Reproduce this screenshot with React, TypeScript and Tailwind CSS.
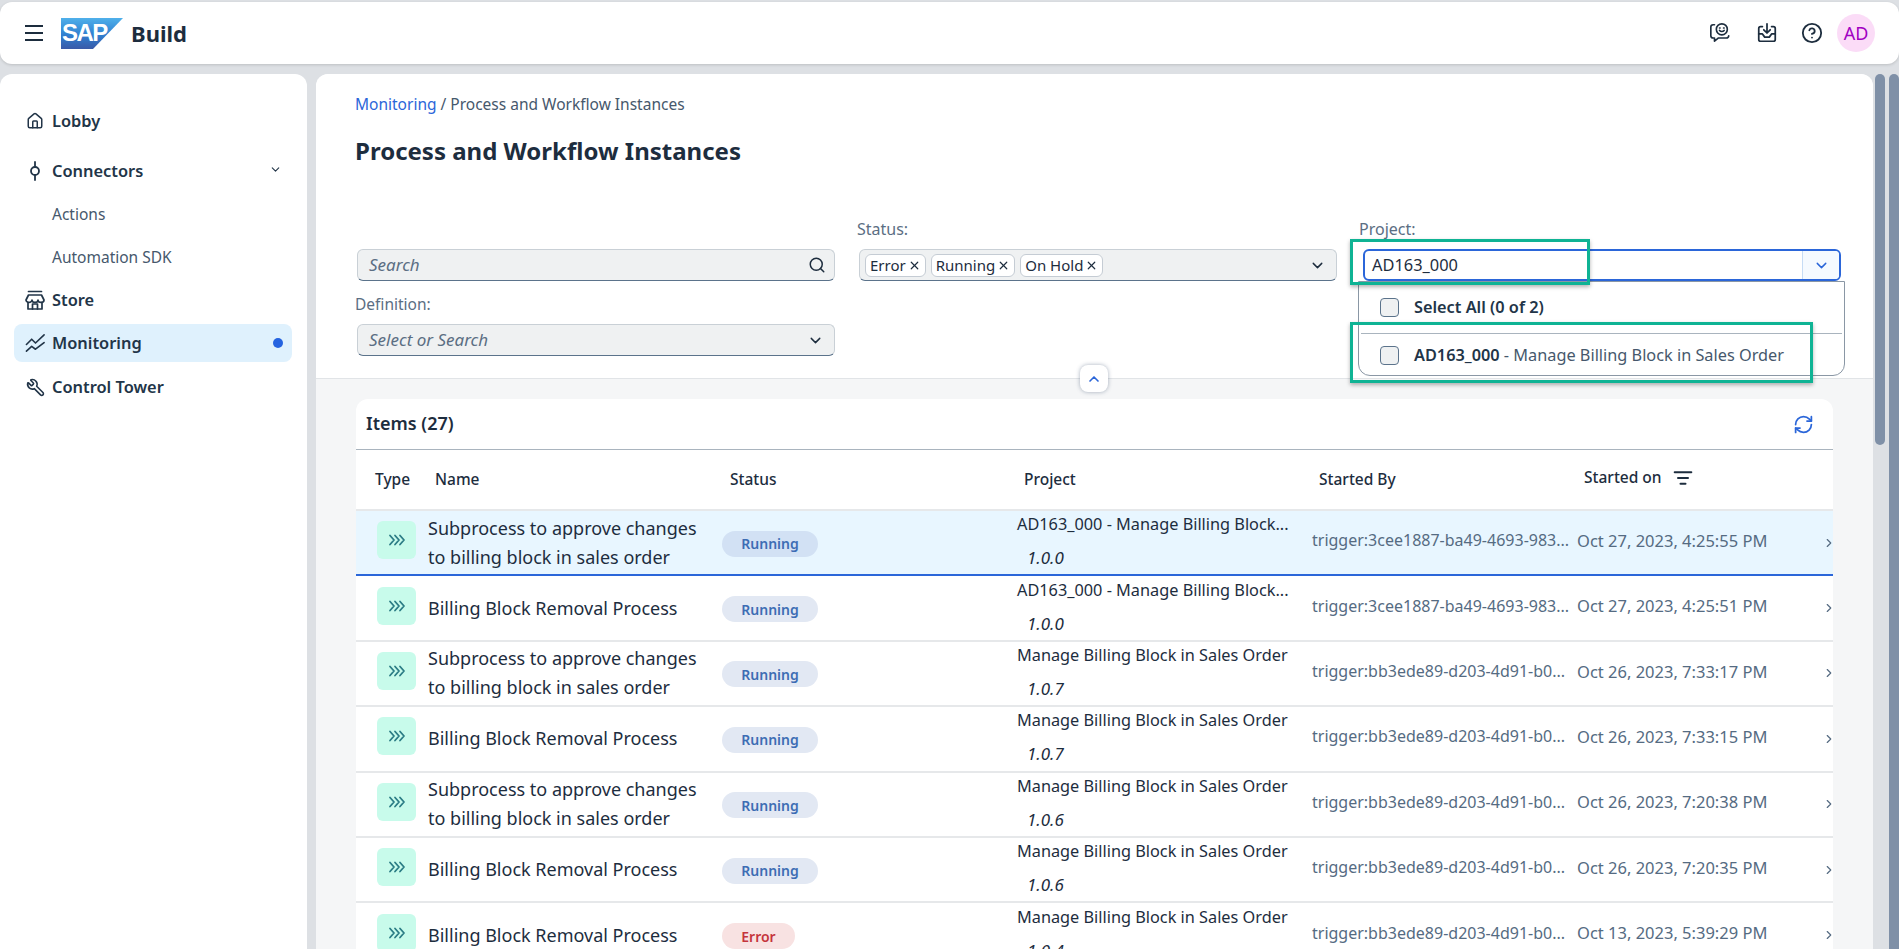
import { ChevronDown, ChevronRight, ChevronUp, CircleHelp, House, ListFilter, RefreshCw, Search, Wrench, X } from "lucide-react";

type Row = { name: string[]; status: string; project: string; version: string; by: string; on: string };

const BILLING = ["Billing Block Removal Process"];
const SUB = ["Subprocess to approve changes", "to billing block in sales order"];
const P1 = "AD163_000 - Manage Billing Block...";
const P2 = "Manage Billing Block in Sales Order";
const T1 = "trigger:3cee1887-ba49-4693-983...";
const T2 = "trigger:bb3ede89-d203-4d91-b0...";

const ROWS: Row[] = [
  { name: SUB, status: "Running", project: P1, version: "1.0.0", by: T1, on: "Oct 27, 2023, 4:25:55 PM" },
  { name: BILLING, status: "Running", project: P1, version: "1.0.0", by: T1, on: "Oct 27, 2023, 4:25:51 PM" },
  { name: SUB, status: "Running", project: P2, version: "1.0.7", by: T2, on: "Oct 26, 2023, 7:33:17 PM" },
  { name: BILLING, status: "Running", project: P2, version: "1.0.7", by: T2, on: "Oct 26, 2023, 7:33:15 PM" },
  { name: SUB, status: "Running", project: P2, version: "1.0.6", by: T2, on: "Oct 26, 2023, 7:20:38 PM" },
  { name: BILLING, status: "Running", project: P2, version: "1.0.6", by: T2, on: "Oct 26, 2023, 7:20:35 PM" },
  { name: BILLING, status: "Error", project: P2, version: "1.0.4", by: T2, on: "Oct 13, 2023, 5:39:29 PM" },
];

function SapLogo() {
  return (
    <div className="relative w-[62px] h-[31px]">
      <svg viewBox="0 0 62 31" className="absolute inset-0 w-full h-full">
        <defs>
          <linearGradient id="sap" x1="0" y1="0" x2="0" y2="1">
            <stop offset="0" stopColor="#4fb0ea" />
            <stop offset="0.55" stopColor="#2f7fd0" />
            <stop offset="1" stopColor="#3a5aa8" />
          </linearGradient>
        </defs>
        <polygon points="0,0 62,0 32,31 0,31" fill="url(#sap)" />
      </svg>
      <span className="absolute left-[1px] top-[3px] text-[24px] leading-[24px] font-bold tracking-[-1.5px] text-white font-['Liberation_Sans',sans-serif]">SAP</span>
    </div>
  );
}

function ChatSmile() {
  return (
    <svg viewBox="0 0 24 24" className="w-[22px] h-[22px]" fill="none" stroke="#1d2d3e" strokeWidth="1.8" strokeLinecap="round" strokeLinejoin="round">
      <circle cx="14" cy="8" r="6" />
      <path d="M11.500 9.200c1.300 1.500 3.700 1.500 5 0" />
      <path d="M11.500 6.500h.6M15.900 6.500h.6" />
      <path d="M6 3H4.500A2.500 2.500 0 0 0 2 5.500V15a2.500 2.500 0 0 0 2.500 2.500H6V21l4-3.500h9a2.500 2.500 0 0 0 2.500-2.500" />
    </svg>
  );
}

function InboxDown() {
  return (
    <svg viewBox="0 0 24 24" className="w-[22px] h-[22px]" fill="none" stroke="#1d2d3e" strokeWidth="1.9" strokeLinecap="round" strokeLinejoin="round">
      <path d="M7 5H5a2 2 0 0 0-2 2v12a2 2 0 0 0 2 2h14a2 2 0 0 0 2-2V7a2 2 0 0 0-2-2h-2" />
      <path d="M12 2v10M8.500 8.500 12 12l3.500-3.500" />
      <path d="M3 13h4l2.500 3.500h5L17 13h4" />
    </svg>
  );
}

function Connector() {
  return (
    <svg viewBox="0 0 20 20" className="w-[20px] h-[20px]" fill="none" stroke="#223548" strokeWidth="1.8" strokeLinecap="round">
      <circle cx="10" cy="10" r="4" />
      <path d="M10 1v5M10 14v5" />
    </svg>
  );
}

function StoreIcon() {
  return (
    <svg viewBox="0 0 20 20" className="w-[20px] h-[20px]" fill="none" stroke="#223548" strokeWidth="1.7" strokeLinecap="round" strokeLinejoin="round">
      <path d="M3.500 1.500h13" />
      <path d="M3.500 5h13l2.500 5a3 2.400 0 0 1-6 0 3 2.400 0 0 1-6 0 3 2.400 0 0 1-6 0z" />
      <path d="M3 12.500V19h14v-6.500" />
      <path d="M7.500 19v-5h5v5" />
    </svg>
  );
}

function Trend() {
  return (
    <svg viewBox="0 0 22 22" className="w-[21px] h-[21px]" fill="none" stroke="#223548" strokeWidth="1.7" strokeLinecap="round" strokeLinejoin="round">
      <path d="M1.500 12 7 6.500l4 4L20 2" />
      <path d="M1.500 19 7 14l4 3 9-7" />
    </svg>
  );
}

function TripleChevron() {
  return (
    <svg viewBox="0 0 18 12" className="w-[18px] h-[12px]" fill="none" stroke="#2b7c85" strokeWidth="1.8" strokeLinecap="round" strokeLinejoin="round">
      <path d="M2 1.500 6 6l-4 4.500M7 1.500 11 6l-4 4.500M12 1.500 16 6l-4 4.500" />
    </svg>
  );
}

function NavItem({ icon, label, sub, active, chevron, className }: { icon?: React.ReactNode; label: string; sub?: boolean; active?: boolean; chevron?: boolean; className?: string }) {
  return (
    <div className={`relative h-[38px] mx-[14px] w-[278px] rounded-lg flex items-center ${active ? "bg-[#dff1fd]" : ""} ${className ?? ""}`}>
      <span className="w-[24px] ml-[9px] flex justify-center shrink-0">{icon}</span>
      {sub ? (
        <span className="ml-[5px] mt-[2px] text-[15.5px] text-[#46586c]">{label}</span>
      ) : (
        <span className="ml-[5px] text-[16.4px] font-semibold text-[#223548]">{label}</span>
      )}
      {chevron && <ChevronDown className="absolute right-[10px] top-[11px] w-[13px] h-[13px] text-[#223548]" />}
      {active && <span className="absolute right-[9px] top-[14px] w-[10px] h-[10px] rounded-full bg-[#2563e0]" />}
    </div>
  );
}

function Pill({ status, selected }: { status: string; selected: boolean }) {
  if (status === "Error") {
    return <span className="w-[73px] h-[26px] mt-[2px] rounded-full bg-[#f8e2e2] text-[#c5343c] text-[14px] font-semibold flex items-center justify-center">Error</span>;
  }
  return (
    <span className={`w-[96px] h-[26px] mt-[2px] rounded-full text-[#3d6db4] text-[14px] font-semibold flex items-center justify-center ${selected ? "bg-[#d2e1f4]" : "bg-[#e2e8f3]"}`}>
      {status}
    </span>
  );
}

function Chip({ label }: { label: string }) {
  return (
    <span className="h-[23px] px-[4px] rounded-md border border-[#c5ccd4] bg-white text-[15px] text-[#1d2d3e] flex items-center gap-[2px]">
      {label}
      <X className="w-[13px] h-[13px] text-[#1d2d3e]" strokeWidth={2.2} />
    </span>
  );
}

function TableRow({ row, selected }: { row: Row; selected: boolean }) {
  return (
    <div className={`h-[65.4px] pl-[21px] grid grid-cols-[51px_294px_295px_295px_266px_249px_1fr] items-center ${selected ? "bg-[#e8f6ff] border-b-2 border-[#2b66d9]" : "border-b-2 border-[#e6e8ea]"}`}>
      <span className="w-[39px] h-[38px] -mt-[5px] rounded-md bg-[#c8fbeb] flex items-center justify-center">
        <TripleChevron />
      </span>
      <div className="text-[18px] leading-[29px] text-[#1d2d3e]">
        {row.name.map((line) => (
          <div key={line}>{line}</div>
        ))}
      </div>
      <Pill status={row.status} selected={selected} />
      <div className="-mt-[3px] text-[#1d2d3e] text-[16.3px]">
        <div className="leading-[22px]">{row.project}</div>
        <div className="leading-[22px] mt-[12px] ml-[10px] italic text-[17px]">{row.version}</div>
      </div>
      <span className="text-[16px] text-[#556b82] -mt-[5px]">{row.by}</span>
      <span className="text-[16.5px] text-[#556b82] -mt-[3px] -ml-[1px]">{row.on}</span>
      <ChevronRight className="w-[14px] h-[14px] text-[#556b82] -ml-[5px]" />
    </div>
  );
}

export default function App() {
  return (
    <div className="h-[949px] overflow-hidden bg-[#dde0e4] pt-[2px] font-['Noto_Sans',sans-serif] text-[#1d2d3e]">
      <header className="h-[62px] rounded-xl bg-white shadow-[0_1px_3px_rgba(0,0,0,0.15)] flex items-center pl-[25px] pr-[24px]">
        <div className="w-[18px] flex flex-col gap-[5px]">
          <span className="h-[2px] bg-[#1d2d3e]" />
          <span className="h-[2px] bg-[#1d2d3e]" />
          <span className="h-[2px] bg-[#1d2d3e]" />
        </div>
        <div className="ml-[18px]">
          <SapLogo />
        </div>
        <span className="ml-[8px] text-[22px] font-bold text-[#1d2d3e]">Build</span>
        <div className="ml-auto flex items-center">
          <ChatSmile />
          <span className="ml-[25px]"><InboxDown /></span>
          <CircleHelp className="ml-[23px] w-[22px] h-[22px] text-[#1d2d3e]" />
          <span className="ml-[14px] w-[38px] h-[38px] rounded-full bg-[#fbdcf7] text-[#a100c2] text-[18px] flex items-center justify-center">AD</span>
        </div>
      </header>

      <div className="flex mt-[10px] h-[875px]">
        <aside className="w-[307px] shrink-0 bg-white rounded-t-xl pt-[28px] flex flex-col gap-[5px]">
          <NavItem icon={<House className="w-[18px] h-[18px] text-[#223548]" />} label="Lobby" />
          <NavItem icon={<Connector />} label="Connectors" chevron className="mt-[7px]" />
          <NavItem label="Actions" sub />
          <NavItem label="Automation SDK" sub />
          <NavItem icon={<StoreIcon />} label="Store" />
          <NavItem icon={<Trend />} label="Monitoring" active />
          <NavItem icon={<Wrench className="w-[19px] h-[19px] text-[#223548] -scale-x-100" />} label="Control Tower" className="mt-[1px]" />
        </aside>

        <main className="ml-[9px] w-[1557px] shrink-0 bg-[#f5f6f7] rounded-t-xl overflow-hidden">
          <section className="relative bg-white border-b border-[#e1e4e7] h-[305px] pt-[18px] pl-[39px]">
            <div className="h-6 leading-6 text-[15.5px] text-[#46586c]">
              <span className="text-[#2b66d9]">Monitoring</span> / Process and Workflow Instances
            </div>
            <h1 className="mt-[19px] h-8 leading-8 text-[24px] font-bold text-[#1d2d3e]">Process and Workflow Instances</h1>
            <div className="mt-[52px] grid grid-cols-[482px_482px_482px] gap-x-[20px] items-end">
              <div className="ml-[2px] w-[478px] h-[32px] rounded-md bg-[#eff1f2] border border-[#c9d0d6] border-b-[#5b738b] flex items-center justify-between pl-[11px] pr-[8px]">
                <span className="italic text-[17px] text-[#5b6e83] -mt-[1px]">Search</span>
                <Search className="w-[18px] h-[18px] text-[#1d2d3e]" />
              </div>
              <div>
                <div className="h-[20px] leading-[20px] mb-[10px] text-[16px] text-[#5b6e83]">Status:</div>
                <div className="ml-[2px] w-[478px] h-[32px] rounded-md bg-[#eff1f2] border border-[#c9d0d6] border-b-[#5b738b] flex items-center pl-[5px] pr-[10px] gap-[5px]">
                  <Chip label="Error" />
                  <Chip label="Running" />
                  <Chip label="On Hold" />
                  <ChevronDown className="ml-auto w-[17px] h-[17px] text-[#1d2d3e]" />
                </div>
              </div>
              <div>
                <div className="h-[20px] leading-[20px] mb-[10px] text-[16px] text-[#5b6e83]">Project:</div>
                <div className="ml-[4px] w-[478px] h-[32px] rounded-md bg-white border-2 border-[#2b66d9] flex items-center pl-[7px]">
                  <span className="text-[16.4px] text-[#1d2d3e]">AD163_000</span>
                  <span className="ml-auto w-[37px] h-full rounded-r border-l border-[#c6dcf5] bg-[#f5faff] flex items-center justify-center">
                    <ChevronDown className="w-[17px] h-[17px] text-[#2b66d9]" />
                  </span>
                </div>
              </div>
              <div className="col-start-1 mt-[13px]">
                <div className="h-[20px] leading-[20px] mb-[10px] text-[15.5px] text-[#5b6e83]">Definition:</div>
                <div className="ml-[2px] w-[478px] h-[32px] rounded-md bg-[#eff1f2] border border-[#c9d0d6] border-b-[#5b738b] flex items-center justify-between pl-[11px] pr-[10px]">
                  <span className="italic text-[17px] text-[#5b6e83] -mt-[1px]">Select or Search</span>
                  <ChevronDown className="w-[17px] h-[17px] text-[#1d2d3e]" />
                </div>
              </div>
            </div>

            {/* open project dropdown, lies over the filter bar */}
            <div className="absolute left-[1042px] top-[207px] w-[487px] h-[95px] rounded-b-xl bg-white border border-[#8a97a5] z-10">
              <div className="h-[52px] mx-[2px] flex items-center pl-[19px] border-b border-[#a9b4be]">
                <span className="w-[19px] h-[19px] rounded bg-[#eff1f2] border border-[#5b738b]" />
                <span className="ml-[15px] text-[16.3px] font-semibold text-[#223548]">Select All (0 of 2)</span>
              </div>
              <div className="h-[42px] flex items-center pl-[21px]">
                <span className="w-[19px] h-[19px] rounded bg-[#eff1f2] border border-[#5b738b]" />
                <span className="ml-[15px] text-[16.3px] text-[#46586c]"><b className="font-semibold text-[#223548]">AD163_000</b> - Manage Billing Block in Sales Order</span>
              </div>
            </div>
            {/* highlight frames from the tutorial */}
            <div className="absolute left-[1034px] top-[165px] w-[240px] h-[46px] border-[3px] border-[#0fb394] shadow-[0_2px_4px_rgba(0,0,0,0.3)] z-20" />
            <div className="absolute left-[1034px] top-[248px] w-[463px] h-[61px] border-[3px] border-[#0fb394] shadow-[0_2px_4px_rgba(0,0,0,0.3)] z-20" />

            <button className="absolute left-[764px] top-[291px] w-[28px] h-[27px] rounded-lg bg-white shadow-[0_0_4px_rgba(60,80,110,0.45)] flex items-center justify-center">
              <ChevronUp className="w-[16px] h-[16px] text-[#2b66d9]" strokeWidth={2.5} />
            </button>
          </section>

          <div className="px-[40px] pt-[20px]">
            <div className="bg-white rounded-t-xl">
              <div className="h-[51px] border-b border-[#a9b4be] flex items-center justify-between pl-[10px] pr-[19px]">
                <span className="text-[18px] font-semibold text-[#1d2d3e] -mt-[1px]">Items (27)</span>
                <RefreshCw className="w-[21px] h-[21px] text-[#2b66d9]" />
              </div>
              <div className="h-[61px] pl-[19px] border-b-2 border-[#e6e8ea] grid grid-cols-[60px_295px_294px_295px_265px_1fr] items-center text-[15.5px] font-medium text-[#1d2d3e]">
                <span>Type</span>
                <span>Name</span>
                <span>Status</span>
                <span>Project</span>
                <span>Started By</span>
                <span className="flex items-center gap-[11px] -mt-[3px]">
                  Started on
                  <ListFilter className="w-[20px] h-[20px]" strokeWidth={2.4} />
                </span>
              </div>
              {ROWS.map((row, i) => (
                <TableRow key={row.on} row={row} selected={i === 0} />
              ))}
            </div>
          </div>
        </main>

        <div className="ml-[2px] w-[10px] h-[371px] rounded-full bg-[#7f90a7]" />
        <div className="ml-[4px] w-[10px] h-full rounded-t-full bg-[#7f90a7]" />
      </div>
    </div>
  );
}
